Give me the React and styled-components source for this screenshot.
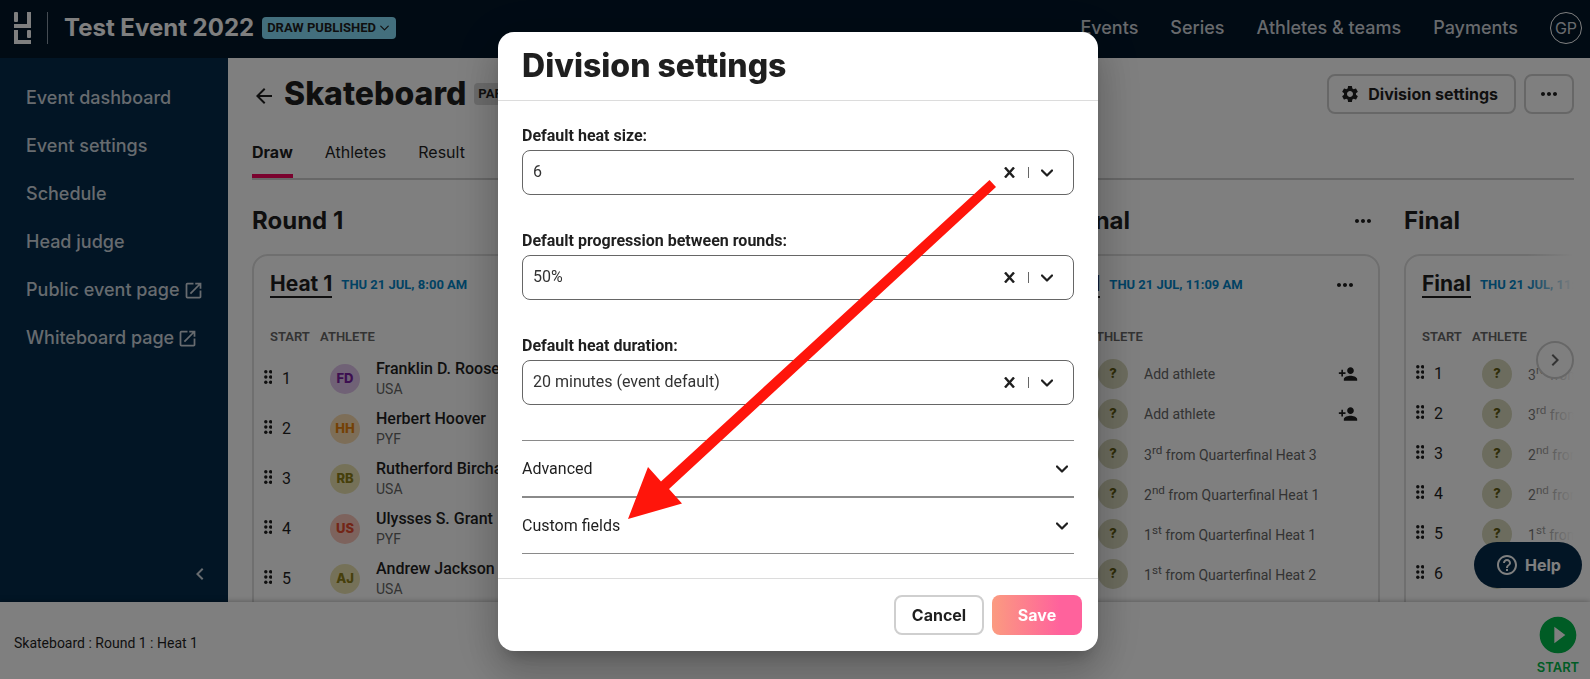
import React from 'react'
import styled, { createGlobalStyle } from 'styled-components'
import {
  MdArrowBack,
  MdChevronLeft,
  MdChevronRight,
  MdHelpOutline,
  MdMoreHoriz,
  MdOpenInNew,
  MdPersonAdd,
  MdPlayCircleFilled,
  MdSettings
} from 'react-icons/md'

const GlobalStyle = createGlobalStyle`
  * {
    box-sizing: border-box;
  }
  body {
    margin: 0;
    background: #fff;
    color: #1f1f1f;
    font-family: Roboto, "Liberation Sans", sans-serif;
    font-size: 16px;
    line-height: 20px;
  }
  button, select {
    font: inherit;
    color: inherit;
    padding: 0;
    border: 0;
    background: none;
  }
  button {
    cursor: pointer;
  }
  a {
    color: inherit;
    text-decoration: none;
  }
  h1, h2, h3 {
    margin: 0;
  }
  svg {
    display: block;
    flex: none;
  }
`

const heading = 'Inter, "Liberation Sans", sans-serif'

const Page = styled.div`
  display: flex;
  flex-direction: column;
  height: 100vh;
  overflow: hidden;
`

/* top bar */
const TopBar = styled.header`
  display: flex;
  align-items: center;
  flex: none;
  height: 58px;
  padding: 0 8px 2px 14px;
  background: #021629;
  color: #fff;
  font-family: ${heading};
`
const EventTitle = styled.h2`
  margin-left: 16px;
  padding-left: 16px;
  border-left: 1px solid #8b98a6;
  font-size: 24px;
  font-weight: 700;
  line-height: 32px;
`
const StatusButton = styled.button`
  display: flex;
  align-items: center;
  gap: 4px;
  height: 22px;
  margin-left: 8px;
  padding: 0 7px 0 5px;
  border-radius: 4px;
  background: #87dffb;
  color: #1f1f1f;
  font-family: Roboto, sans-serif;
  font-size: 13px;
  font-weight: 700;
  line-height: 20px;
`
const TopNav = styled.nav`
  display: flex;
  align-items: center;
  gap: 32px;
  margin-left: auto;
  font-size: 18px;
  font-weight: 500;
  color: #d0d4da;
`
const UserBadge = styled.a`
  width: 32px;
  height: 32px;
  border: 1px solid #fff;
  border-radius: 50%;
  font-size: 16px;
  font-weight: 400;
  line-height: 30px;
  text-align: center;
`

/* body */
const Body = styled.div`
  display: flex;
  flex: 1;
  min-height: 0;
`
const Sidebar = styled.nav`
  display: flex;
  flex-direction: column;
  flex: none;
  width: 228px;
  padding: 16px 16px 16px 26px;
  background: #042a4a;
  color: #ced6de;
  font-family: ${heading};
  font-size: 18px;
  font-weight: 500;
`
const SidebarLink = styled.a`
  display: flex;
  align-items: center;
  gap: 3px;
  height: 48px;
`
const CollapseButton = styled.button`
  margin-top: auto;
  margin-left: auto;
`
const Main = styled.main`
  display: flex;
  flex-direction: column;
  flex: 1;
  min-width: 0;
  padding: 16px 16px 0 24px;
`
const TitleRow = styled.div`
  display: flex;
  align-items: center;
  gap: 8px;
  height: 40px;
  margin-bottom: 12px;
`
const BackLink = styled.a`
  padding-top: 4px;
`
const PageTitle = styled.h1`
  font-family: ${heading};
  font-size: 32px;
  font-weight: 800;
  line-height: 40px;
`
const Tag = styled.span`
  height: 22px;
  padding: 0 4px;
  border-radius: 4px;
  background: #d8d8d8;
  font-size: 13px;
  font-weight: 700;
  line-height: 22px;
`
const OutlineButton = styled.button`
  display: flex;
  align-items: center;
  justify-content: center;
  gap: 8px;
  min-width: ${({ $wide }) => ($wide ? '90px' : '50px')};
  height: 40px;
  padding: ${({ $withIcon }) => ($withIcon ? '0 16px 0 11px' : '0 11px')};
  border: 2px solid #cfcfcf;
  border-radius: 8px;
  font-family: ${heading};
  font-weight: 700;
`
const TitleActions = styled.div`
  display: flex;
  gap: 8px;
  margin-left: auto;
`
const Tabs = styled.nav`
  display: flex;
  gap: 32px;
  border-bottom: 2px solid #cfcfcf;
  font-family: ${heading};
`
const Tab = styled.a`
  padding: 16px 0 12px;
  border-bottom: 4px solid ${({ $active }) => ($active ? '#f5055c' : 'transparent')};
  font-weight: ${({ $active }) => ($active ? 700 : 400)};
`

/* rounds */
const RoundsArea = styled.div`
  position: relative;
  display: flex;
  flex: 1;
  gap: 24px;
  min-height: 0;
  overflow: hidden;
`
const RoundColumn = styled.section`
  display: flex;
  flex-direction: column;
  flex: 0 0 360px;
`
const RoundHeader = styled.div`
  display: flex;
  align-items: center;
  justify-content: space-between;
  flex: none;
  height: 32px;
  margin: 25px 0 17px;
  padding-right: 5px;
  font-family: ${heading};

  h2 {
    font-size: 24px;
    font-weight: 700;
  }
`
const HeatCard = styled.article`
  flex: 1 0 480px;
  border: 2px solid #dedede;
  border-radius: 16px;
`
const HeatHeader = styled.div`
  display: flex;
  align-items: center;
  gap: 9px;
  padding: 16px 21px 0 16px;
  margin-bottom: 20px;

  button {
    margin-left: auto;
  }
`
const HeatLink = styled.a`
  border-bottom: 2px solid #1f1f1f;
  font-family: ${heading};
  font-size: 21px;
  font-weight: 700;
  line-height: 24px;
`
const HeatTime = styled.time`
  color: #0284c7;
  font-size: 13px;
  font-weight: 700;
`
const EntryTable = styled.table`
  width: 100%;
  table-layout: fixed;
  border-collapse: collapse;

  th {
    height: 36px;
    padding: 1px 0 0;
    color: #666;
    font-size: 13px;
    font-weight: 600;
    text-align: left;
  }
  th:first-child {
    width: 66px;
    padding-left: 16px;
  }
  td {
    height: ${({ $roomy }) => ($roomy ? '50px' : '40px')};
    padding: 0;
  }
`
const StartCell = styled.div`
  display: flex;
  align-items: center;
  gap: 10px;
  padding-left: 10px;

  svg {
    margin-bottom: 4px;
  }
`
const AthleteCell = styled.div`
  display: flex;
  align-items: center;
  padding: 0 20px 0 10px;

  button {
    margin-left: auto;
  }
`
const Avatar = styled.span`
  flex: none;
  width: 30px;
  height: 30px;
  margin-right: 16px;
  border-radius: 50%;
  background: ${({ $bg }) => $bg};
  color: ${({ $fg }) => $fg};
  font-family: ${heading};
  font-size: 13px;
  font-weight: 800;
  line-height: 29px;
  text-align: center;
`
const AthleteName = styled.div`
  font-weight: 500;
  white-space: nowrap;
`
const Country = styled.div`
  color: #666;
  font-size: 14px;
`
const Placeholder = styled.span`
  color: #666;
  font-size: 14px;
  white-space: nowrap;

  sup {
    line-height: 14px;
  }
`
const RightFade = styled.div`
  position: absolute;
  top: 74px;
  right: 0;
  bottom: 0;
  width: 48px;
  background: linear-gradient(to right, rgba(255, 255, 255, 0), #fff);
`
const ScrollButton = styled.button`
  position: absolute;
  top: 161px;
  right: 0;
  display: flex;
  align-items: center;
  justify-content: center;
  width: 38px;
  height: 38px;
  border: 2px solid #cfcfcf;
  border-radius: 50%;
  background: #fff;
  color: #666;
`

/* bottom bar */
const BottomBar = styled.footer`
  position: relative;
  display: flex;
  align-items: center;
  justify-content: space-between;
  flex: none;
  height: 77px;
  padding: 5px 10px 0 14px;
  background: #fff;
  box-shadow: 0 0 6px rgba(0, 0, 0, 0.35);
  font-size: 14px;
`
const StartButton = styled.button`
  display: flex;
  flex-direction: column;
  align-items: center;
  padding-top: 4px;
  color: #00b84a;
  font-family: ${heading};
  font-size: 13px;
  font-weight: 600;
`
const HelpButton = styled.button`
  position: fixed;
  right: 8px;
  bottom: 91px;
  display: flex;
  align-items: center;
  justify-content: center;
  gap: 6px;
  width: 108px;
  height: 46px;
  border-radius: 23px;
  background: #042a4a;
  color: #fff;
  font-family: ${heading};
  font-weight: 700;
`

/* dialog */
const Backdrop = styled.div`
  position: fixed;
  inset: 0;
  display: flex;
  align-items: center;
  justify-content: center;
  padding: 4px 0 0 6px;
  background: rgba(0, 0, 0, 0.5);
`
const Dialog = styled.div`
  position: relative;
  width: 600px;
  border-radius: 16px;
  background: #fff;
  box-shadow: 0 11px 15px -7px rgba(0, 0, 0, 0.2), 0 24px 38px 3px rgba(0, 0, 0, 0.14),
    0 9px 46px 8px rgba(0, 0, 0, 0.12);
`
const DialogHeader = styled.div`
  padding: 14px 24px;
  border-bottom: 1px solid #dcdcdc;
`
const DialogBody = styled.div`
  padding: 25px 24px 24px;
`
const Field = styled.div`
  & + & {
    margin-top: 36px;
  }

  label {
    display: block;
    margin-bottom: 4px;
    font-weight: 700;
  }
`
const SelectBox = styled.div`
  display: flex;
  align-items: center;
  height: 45px;
  padding-right: 20px;
  border: 1px solid #666;
  border-radius: 8px;

  select {
    flex: 1;
    height: 43px;
    padding: 0 0 1px 10px;
    color: #333;
    appearance: none;
    outline: none;
  }
`
const Separator = styled.span`
  width: 1px;
  height: 11px;
  margin: 0 12px 0 13px;
  background: #666;
`
const Accordion = styled.div`
  margin-top: 35px;
`
const AccordionButton = styled.button`
  display: flex;
  align-items: center;
  justify-content: space-between;
  width: 100%;
  height: 57px;
  padding-right: 6px;
  border-top: 1px solid #8a8a8a;
  border-bottom: 1px solid #8a8a8a;
`
const DialogFooter = styled.div`
  display: flex;
  justify-content: flex-end;
  gap: 8px;
  padding: 16px;
  border-top: 1px solid #dcdcdc;
`
const SaveButton = styled.button`
  width: 90px;
  height: 40px;
  border-radius: 8px;
  background: linear-gradient(to right, #fb9b80, #ff629c 75%);
  color: #fff;
  font-family: ${heading};
  font-weight: 700;
`
const PointerArrow = styled.svg`
  position: absolute;
  top: 0;
  left: 0;
  pointer-events: none;
`

const Logo = () => (
  <svg width="17" height="32" viewBox="0 0 17 32" fill="#fff">
    <rect width="4" height="10" rx="1" />
    <path d="M13 0h4v16H0v-4h13z" />
    <path d="M0 18h4v10h13v4H0z" />
    <rect x="13" y="18" width="4" height="8" rx="1" />
  </svg>
)

const Chevron = ({ width = 12, stroke = 2.2 }) => (
  <svg width={width} height={(width * 2) / 3} viewBox="0 0 12 8" fill="none" stroke="currentColor" strokeWidth={stroke} strokeLinecap="round" strokeLinejoin="round">
    <path d="M1 1.5l5 5 5-5" />
  </svg>
)

const Cross = () => (
  <svg width="11" height="11" viewBox="0 0 11 11" stroke="currentColor" strokeWidth="2.4">
    <path d="M1 0.5l9 10M10 0.5l-9 10" />
  </svg>
)

const DragHandle = () => (
  <svg width="8" height="14" viewBox="0 0 8 14" fill="currentColor">
    {[1.8, 7, 12.2].map(y => (
      <React.Fragment key={y}>
        <circle cx="1.8" cy={y} r="1.7" />
        <circle cx="6.6" cy={y} r="1.7" />
      </React.Fragment>
    ))}
  </svg>
)

const presidents = [
  { initials: 'FD', name: 'Franklin D. Roosevelt', country: 'USA', bg: '#e1c4ec', fg: '#7b1fa2' },
  { initials: 'HH', name: 'Herbert Hoover', country: 'PYF', bg: '#fbdcb0', fg: '#e8830c' },
  { initials: 'RB', name: 'Rutherford Birchard', country: 'USA', bg: '#ebe3b0', fg: '#8d7f17' },
  { initials: 'US', name: 'Ulysses S. Grant', country: 'PYF', bg: '#fbc6ba', fg: '#e64a2e' },
  { initials: 'AJ', name: 'Andrew Jackson', country: 'USA', bg: '#ebe3b0', fg: '#8d7f17' }
]

const rounds = [
  { name: 'Round 1', heat: 'Heat 1', time: 'THU 21 JUL, 8:00 AM', athletes: presidents },
  { name: 'Quarterfinal', heat: 'Heat 1', time: 'THU 21 JUL, 9:55 AM', athletes: [] },
  {
    name: 'Semifinal',
    heat: 'Heat 1',
    time: 'THU 21 JUL, 11:09 AM',
    athletes: [
      {},
      {},
      { place: 3, suffix: 'rd', from: 'Quarterfinal Heat 3' },
      { place: 2, suffix: 'nd', from: 'Quarterfinal Heat 1' },
      { place: 1, suffix: 'st', from: 'Quarterfinal Heat 1' },
      { place: 1, suffix: 'st', from: 'Quarterfinal Heat 2' }
    ]
  },
  {
    name: 'Final',
    heat: 'Final',
    time: 'THU 21 JUL, 11:53 AM',
    athletes: [
      { place: 3, suffix: 'rd', from: 'Semifinal Heat 2' },
      { place: 3, suffix: 'rd', from: 'Semifinal Heat 1' },
      { place: 2, suffix: 'nd', from: 'Semifinal Heat 2' },
      { place: 2, suffix: 'nd', from: 'Semifinal Heat 1' },
      { place: 1, suffix: 'st', from: 'Semifinal Heat 1' },
      { place: 1, suffix: 'st', from: 'Semifinal Heat 2' }
    ]
  }
]

const fields = [
  { id: 'heat-size', label: 'Default heat size:', value: '6' },
  { id: 'progression', label: 'Default progression between rounds:', value: '50%' },
  { id: 'duration', label: 'Default heat duration:', value: '20 minutes (event default)' }
]

const Entry = ({ athlete }) => {
  if (athlete.name) {
    return (
      <AthleteCell>
        <Avatar $bg={athlete.bg} $fg={athlete.fg}>{athlete.initials}</Avatar>
        <div>
          <AthleteName>{athlete.name}</AthleteName>
          <Country>{athlete.country}</Country>
        </div>
      </AthleteCell>
    )
  }
  return (
    <AthleteCell>
      <Avatar $bg="#d8d8bc" $fg="#5f5a10">?</Avatar>
      {athlete.place ? (
        <Placeholder>{athlete.place}<sup>{athlete.suffix}</sup> from {athlete.from}</Placeholder>
      ) : (
        <>
          <Placeholder>Add athlete</Placeholder>
          <button aria-label="Add athlete"><MdPersonAdd size={20} /></button>
        </>
      )}
    </AthleteCell>
  )
}

const Round = ({ round }) => (
  <RoundColumn>
    <RoundHeader>
      <h2>{round.name}</h2>
      <button aria-label="Round options"><MdMoreHoriz size={24} /></button>
    </RoundHeader>
    <HeatCard>
      <HeatHeader>
        <HeatLink href="#heat">{round.heat}</HeatLink>
        <HeatTime>{round.time}</HeatTime>
        <button aria-label="Heat options"><MdMoreHoriz size={24} /></button>
      </HeatHeader>
      <EntryTable $roomy={round.athletes === presidents}>
        <thead>
          <tr>
            <th>START</th>
            <th>ATHLETE</th>
          </tr>
        </thead>
        <tbody>
          {round.athletes.map((athlete, i) => (
            <tr key={i}>
              <td><StartCell><DragHandle />{i + 1}</StartCell></td>
              <td><Entry athlete={athlete} /></td>
            </tr>
          ))}
        </tbody>
      </EntryTable>
    </HeatCard>
  </RoundColumn>
)

const DivisionSettings = () => (
  <Backdrop>
    <Dialog role="dialog" aria-modal="true" aria-labelledby="dialog-title">
      <DialogHeader>
        <PageTitle as="h2" id="dialog-title">Division settings</PageTitle>
      </DialogHeader>
      <DialogBody>
        {fields.map(({ id, label, value }) => (
          <Field key={id}>
            <label htmlFor={id}>{label}</label>
            <SelectBox>
              <select id={id} defaultValue={value}>
                <option>{value}</option>
              </select>
              <button aria-label="Clear"><Cross /></button>
              <Separator />
              <Chevron />
            </SelectBox>
          </Field>
        ))}
        <Accordion>
          <AccordionButton aria-expanded="false">Advanced <Chevron /></AccordionButton>
          <AccordionButton aria-expanded="false">Custom fields <Chevron /></AccordionButton>
        </Accordion>
      </DialogBody>
      <DialogFooter>
        <OutlineButton $wide>Cancel</OutlineButton>
        <SaveButton>Save</SaveButton>
      </DialogFooter>
      <PointerArrow width="600" height="619" viewBox="0 0 600 619" fill="#ff150b">
        <path d="M491.500 148L498 155L171 457L184 471.500L130 487L150 435L163 449.500Z" />
      </PointerArrow>
    </Dialog>
  </Backdrop>
)

export default () => {
  return (
    <>
      <GlobalStyle />
      <Page>
        <TopBar>
          <a href="#home" aria-label="Home"><Logo /></a>
          <EventTitle>Test Event 2022</EventTitle>
          <StatusButton>DRAW PUBLISHED <Chevron width={9} stroke={1.6} /></StatusButton>
          <TopNav>
            <a href="#events">Events</a>
            <a href="#series">Series</a>
            <a href="#athletes">Athletes &amp; teams</a>
            <a href="#payments">Payments</a>
            <UserBadge href="#account">GP</UserBadge>
          </TopNav>
        </TopBar>
        <Body>
          <Sidebar>
            <SidebarLink href="#dashboard">Event dashboard</SidebarLink>
            <SidebarLink href="#settings">Event settings</SidebarLink>
            <SidebarLink href="#schedule">Schedule</SidebarLink>
            <SidebarLink href="#judge">Head judge</SidebarLink>
            <SidebarLink href="#public">Public event page <MdOpenInNew size={21} /></SidebarLink>
            <SidebarLink href="#whiteboard">Whiteboard page <MdOpenInNew size={21} /></SidebarLink>
            <CollapseButton aria-label="Collapse menu"><MdChevronLeft size={24} /></CollapseButton>
          </Sidebar>
          <Main>
            <TitleRow>
              <BackLink href="#back" aria-label="Back"><MdArrowBack size={24} /></BackLink>
              <PageTitle>Skateboard</PageTitle>
              <Tag>PARTIALLY SEEDED</Tag>
              <TitleActions>
                <OutlineButton $withIcon><MdSettings size={20} /> Division settings</OutlineButton>
                <OutlineButton aria-label="More options"><MdMoreHoriz size={24} /></OutlineButton>
              </TitleActions>
            </TitleRow>
            <Tabs>
              <Tab href="#draw" $active>Draw</Tab>
              <Tab href="#athletes">Athletes</Tab>
              <Tab href="#result">Result</Tab>
            </Tabs>
            <RoundsArea>
              {rounds.map(round => <Round key={round.name} round={round} />)}
              <RightFade />
              <ScrollButton aria-label="Next rounds"><MdChevronRight size={24} /></ScrollButton>
            </RoundsArea>
          </Main>
        </Body>
        <BottomBar>
          <span>Skateboard : Round 1 : Heat 1</span>
          <StartButton><MdPlayCircleFilled size={44} />START</StartButton>
        </BottomBar>
        <HelpButton><MdHelpOutline size={24} /> Help</HelpButton>
      </Page>
      <DivisionSettings />
    </>
  )
}
